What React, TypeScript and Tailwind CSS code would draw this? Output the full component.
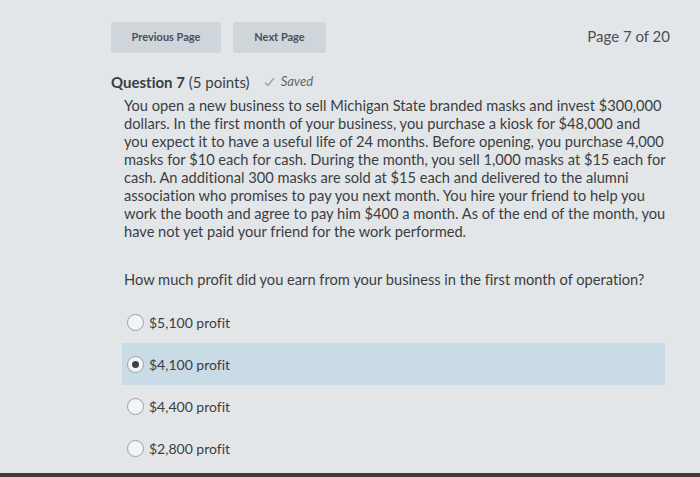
import React from "react";

const options = ["$5,100 profit", "$4,100 profit", "$4,400 profit", "$2,800 profit"];
const selected = 1;

const lines = [
	"You open a new business to sell Michigan State branded masks and invest $300,000",
	"dollars. In the first month of your business, you purchase a kiosk for $48,000 and",
	"you expect it to have a useful life of 24 months. Before opening, you purchase 4,000",
	"masks for $10 each for cash. During the month, you sell 1,000 masks at $15 each for",
	"cash. An additional 300 masks are sold at $15 each and delivered to the alumni",
	"association who promises to pay you next month. You hire your friend to help you",
	"work the booth and agree to pay him $400 a month. As of the end of the month, you",
	"have not yet paid your friend for the work performed.",
];

const Radio = ({ checked }: { checked: boolean }) => (
	<span className="w-[17px] h-[17px] rounded-full border border-[#9aa0a6] bg-[#f2f4f5] flex items-center justify-center shrink-0">
		{checked && <span className="w-[7px] h-[7px] rounded-full bg-[#3d4247]" />}
	</span>
);

export default function App() {
	return (
		<div className="w-[700px] h-[477px] overflow-hidden bg-[#e3e6e8] flex flex-col font-['Lato','Open_Sans',sans-serif] text-[#3a3e43] [font-variant-ligatures:none]">
			<div className="flex items-start pt-[22px] pl-[111px] pr-[30px] h-[62px]">
				<button className="w-[110px] h-[31px] rounded-[3px] bg-[#ced5db] text-[11px] font-bold text-[#4b5157]">
					Previous Page
				</button>
				<button className="ml-[12px] w-[93px] h-[31px] rounded-[3px] bg-[#ced5db] text-[11px] font-bold text-[#4b5157]">
					Next Page
				</button>
				<span className="ml-auto mt-[3px] text-[15px] text-[#4a4f55]">Page 7 of 20</span>
			</div>
			<div className="pl-[111px] flex items-center gap-[14px] h-[24px] mt-[8px]">
				<span className="text-[15px]">
					<b className="font-bold">Question 7</b> (5 points)
				</span>
				<span className="flex items-center gap-[6px] text-[13px] italic text-[#5f656b]">
					<svg width="11" height="10" viewBox="0 0 11 10" fill="none">
						<path d="M1 5.5 L4 8.5 L10 1" stroke="#9aa1a7" strokeWidth="1.3" />
					</svg>
					Saved
				</span>
			</div>
			<div className="ml-[124px] mt-[3px] text-[14.65px] leading-[18px] whitespace-nowrap">
				{lines.map((l) => (
					<div key={l}>{l}</div>
				))}
			</div>
			<p className="pl-[124px] mt-[30px] text-[14.65px] leading-[18px]">
				How much profit did you earn from your business in the first month of operation?
			</p>
			<div className="mt-[12px] flex flex-col pl-[122px] pr-[35px]">
				{options.map((o, i) => (
					<div
						key={o}
						className={`h-[42px] flex items-center gap-[5px] pl-[5px] text-[14px] ${i === selected ? "bg-[#c9dbe6]" : ""}`}
					>
						<Radio checked={i === selected} />
						{o}
					</div>
				))}
			</div>
			<div className="mt-auto h-[4px] bg-[#4a3a35]" />
		</div>
	);
}
